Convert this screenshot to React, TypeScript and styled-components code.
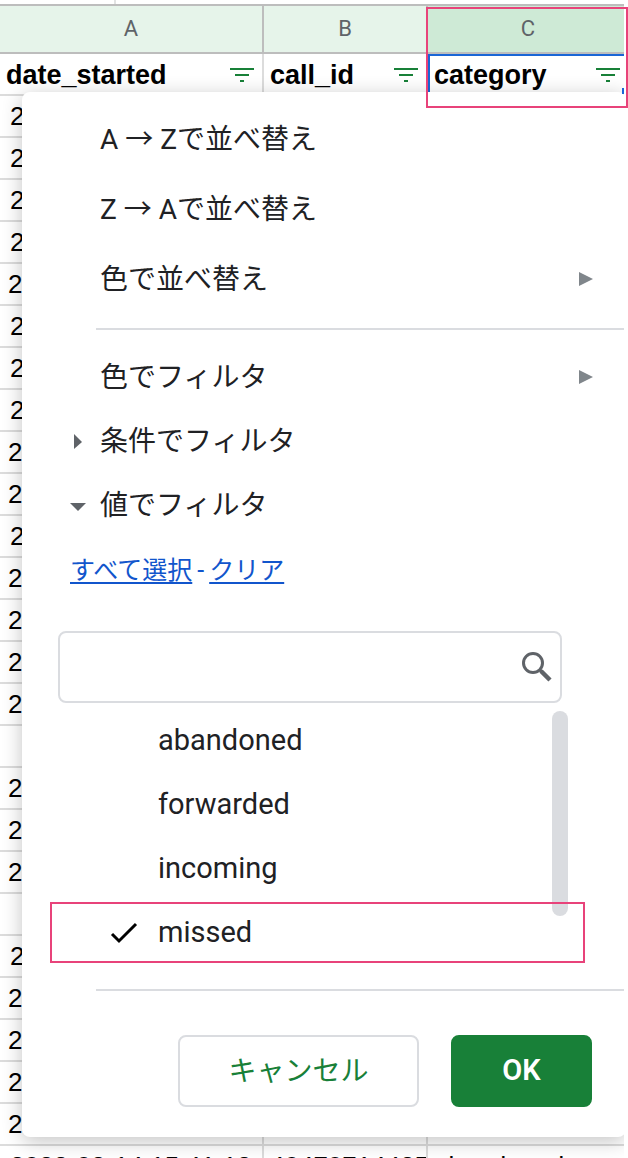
import React from "react";
import styled, { createGlobalStyle, css } from "styled-components";

const Global = createGlobalStyle`
  * { box-sizing: border-box; }
  body {
    margin: 0;
    background: #fff;
    font-family: Roboto, "Noto Sans CJK JP", sans-serif;
    color: #202124;
  }
  button, input { font: inherit; color: inherit; }
`;

const Page = styled.main`
  position: relative;
  padding-right: 4px;
`;

const Viewport = styled.div`
  position: relative;
  height: 100vh;
  overflow: hidden;
`;

const TopStrip = styled.div`
  width: 116px;
  height: 4px;
  border-right: 2px solid #e2e3e3;
`;

const Sheet = styled.table`
  width: calc(100% + 6px);
  table-layout: fixed;
  border-collapse: separate;
  border-spacing: 0;
  font-family: "Liberation Sans", Arial, sans-serif;
  font-size: 26px;
  line-height: 30px;
  color: #000;
`;

const Column = styled.col<{ $width?: number }>`
  ${(p) => p.$width && `width: ${p.$width}px;`}
`;

const ColumnLetter = styled.th<{ $active?: boolean }>`
  height: 50px;
  padding: 0;
  border: 0 solid #bdbdbd;
  border-width: 2px 2px 2px 0;
  background: ${(p) => (p.$active ? "#ceead6" : "#e6f4ea")};
  color: #5f6368;
  font-family: Roboto, sans-serif;
  font-size: 22px;
  font-weight: 400;
`;

const cell = css`
  height: 42px;
  padding: 0 6px;
  border: 0 solid #dcdcdc;
  border-width: 0 2px 2px 0;
  white-space: nowrap;
  overflow: hidden;
`;

const FieldCell = styled.th<{ $selected?: boolean }>`
  ${cell}
  padding-top: 2px;
  font-size: 27px;
  text-align: left;
  ${(p) => p.$selected && "box-shadow: inset 2px 2px #1a66d6;"}
`;

const DataCell = styled.td<{ $indent?: number }>`
  ${cell}
  ${(p) => p.$indent && `padding: 0 0 0 ${p.$indent}px;`}
`;

const Field = styled.div`
  display: flex;
  align-items: center;
  justify-content: space-between;
`;

const FilterButton = styled.button`
  display: flex;
  padding: 0 2px;
  border: 0;
  background: none;
`;

const Menu = styled.section`
  position: absolute;
  top: 92px;
  left: 22px;
  right: -2px;
  padding: 12px 0 30px;
  border-radius: 8px;
  background: #fff;
  box-shadow: 0 4px 20px rgba(0, 0, 0, 0.24);
  font-size: 28px;
`;

const SelectionHandle = styled.span`
  position: absolute;
  top: 88px;
  right: 0;
  width: 2px;
  height: 6px;
  background: #1a66d6;
`;

const MenuItem = styled.button<{ $compact?: boolean }>`
  display: flex;
  align-items: center;
  width: 100%;
  height: ${(p) => (p.$compact ? 64 : 70)}px;
  padding: 0 33px 0 48px;
  border: 0;
  background: none;
  text-align: left;
  white-space: nowrap;
`;

const Marker = styled.span`
  display: flex;
  width: 30px;
`;

const Label = styled.span`
  flex: 1;
  padding-bottom: 4px;
`;

const Divider = styled.hr`
  height: 2px;
  margin: 14px 2px 15px 74px;
  border: 0;
  background: #dadce0;
`;

const Links = styled.div`
  display: flex;
  gap: 5px;
  padding: 18px 48px 0;
  font-size: 25px;
  line-height: 32px;
  color: #1155cc;
`;

const Link = styled.a`
  color: inherit;
  text-underline-offset: 3px;
  text-decoration-thickness: 2px;
`;

const SearchBox = styled.label`
  display: flex;
  align-items: center;
  height: 72px;
  margin: 44px 64px 0 36px;
  padding: 0 7px 0 16px;
  border: 2px solid #dadce0;
  border-radius: 8px;
`;

const SearchInput = styled.input`
  flex: 1;
  min-width: 0;
  border: 0;
  outline: 0;
  background: none;
`;

const ValueList = styled.div`
  display: flex;
  margin: 5px 58px 0 28px;
  padding-bottom: 11px;
`;

const Values = styled.div`
  flex: 1;
`;

const Value = styled.label`
  display: flex;
  align-items: center;
  height: 64px;
  padding-left: 60px;
  font-size: 29px;
`;

const Check = styled.input`
  appearance: none;
  width: 28px;
  height: 28px;
  margin: 0 20px 0 0;
  &:checked {
    background: center / 28px no-repeat
      url("data:image/svg+xml,%3Csvg xmlns='http://www.w3.org/2000/svg' viewBox='0 0 28 28' fill='none' stroke='%23000' stroke-width='3'%3E%3Cpath d='M2 16l7 7L26 6'/%3E%3C/svg%3E");
  }
`;

const ScrollThumb = styled.div`
  width: 16px;
  height: 205px;
  margin-top: 3px;
  border-radius: 8px;
  background: #dadce0;
`;

const Actions = styled.div`
  display: flex;
  justify-content: flex-end;
  gap: 32px;
  margin-top: 44px;
  padding-right: 34px;
`;

const ActionButton = styled.button<{ $primary?: boolean }>`
  width: ${(p) => (p.$primary ? 141 : 241)}px;
  height: 72px;
  padding: 0 0 ${(p) => (p.$primary ? 2 : 4)}px;
  border: 2px solid ${(p) => (p.$primary ? "#188038" : "#dadce0")};
  border-radius: 8px;
  background: ${(p) => (p.$primary ? "#188038" : "#fff")};
  color: ${(p) => (p.$primary ? "#fff" : "#188038")};
  font-size: ${(p) => (p.$primary ? 29 : 28)}px;
  font-weight: ${(p) => (p.$primary ? 600 : 400)};
`;

const Highlight = styled.div<{ $area: "column" | "value" }>`
  position: absolute;
  pointer-events: none;
  border: 2px solid #e8437a;
  ${(p) =>
    p.$area === "column"
      ? "top: 7px; left: 426px; right: 0; height: 101px;"
      : "top: 902px; left: 50px; right: 43px; height: 61px;"}
`;

const FilterIcon = () => (
  <svg width="24" height="14" viewBox="0 0 24 14" fill="#188038" aria-hidden="true">
    <path d="M0 0h24v2H0zM5 6h14v2H5zM10 12h4v2h-4z" />
  </svg>
);

const SearchIcon = () => (
  <svg width="32" height="32" viewBox="0 0 32 32" fill="none" stroke="#5f6368" aria-hidden="true">
    <circle cx="12" cy="12" r="9.5" strokeWidth="3" />
    <path d="M18.5 18.5l2 2" strokeWidth="3" />
    <path d="M20 20l9 9" strokeWidth="4.5" />
  </svg>
);

type CaretProps = { d: string; size: number; fill?: string };

const Caret = ({ d, size, fill = "#5f6368" }: CaretProps) => (
  <svg width={size} height={size} viewBox={`0 0 ${size} ${size}`} fill={fill} aria-hidden="true">
    <path d={d} />
  </svg>
);

const SubmenuArrow = () => <Caret d="M0 0l14 7L0 14z" size={14} fill="#80868b" />;

const fields = [
  { letter: "A", name: "date_started" },
  { letter: "B", name: "call_id" },
  { letter: "C", name: "category" },
];

// Left indent of each date; 0 marks a row without one.
const rowIndents = [
  10, 10, 10, 10, 8, 10, 10, 10, 8, 8, 10, 8, 8, 8, 8, 0, 8, 8, 8, 0, 10, 8, 8, 8, 8,
];

const values = ["abandoned", "forwarded", "incoming", "missed"];

export default function App() {
  return (
    <Page>
      <Global />
      <Viewport>
        <TopStrip />
        <Sheet>
          <colgroup>
            <Column $width={264} />
            <Column $width={164} />
            <Column />
          </colgroup>
          <thead>
            <tr>
              {fields.map((f) => (
                <ColumnLetter key={f.letter} $active={f.letter === "C"}>
                  {f.letter}
                </ColumnLetter>
              ))}
            </tr>
            <tr>
              {fields.map((f) => (
                <FieldCell key={f.name} $selected={f.letter === "C"}>
                  <Field>
                    {f.name}
                    <FilterButton aria-label={`${f.name} filter`}>
                      <FilterIcon />
                    </FilterButton>
                  </Field>
                </FieldCell>
              ))}
            </tr>
          </thead>
          <tbody>
            {rowIndents.map((indent, i) => (
              <tr key={i}>
                <DataCell $indent={indent}>{indent ? "2" : ""}</DataCell>
                <DataCell />
                <DataCell />
              </tr>
            ))}
            <tr>
              <DataCell $indent={10}>2022-02-14 15:41:18</DataCell>
              <DataCell>404707144351</DataCell>
              <DataCell>abandoned</DataCell>
            </tr>
          </tbody>
        </Sheet>

        <Menu>
          <MenuItem><Marker /><Label>A → Zで並べ替え</Label></MenuItem>
          <MenuItem><Marker /><Label>Z → Aで並べ替え</Label></MenuItem>
          <MenuItem><Marker /><Label>色で並べ替え</Label><SubmenuArrow /></MenuItem>
          <Divider />
          <MenuItem $compact><Marker /><Label>色でフィルタ</Label><SubmenuArrow /></MenuItem>
          <MenuItem $compact aria-expanded="false">
            <Marker><Caret d="M4 1l8 8-8 7z" size={16} /></Marker>
            <Label>条件でフィルタ</Label>
          </MenuItem>
          <MenuItem $compact aria-expanded="true">
            <Marker><Caret d="M0 6h16l-8 8z" size={16} /></Marker>
            <Label>値でフィルタ</Label>
          </MenuItem>
          <Links>
            <Link href="#all">すべて選択</Link>-<Link href="#clear">クリア</Link>
          </Links>
          <SearchBox>
            <SearchInput type="text" aria-label="検索" />
            <SearchIcon />
          </SearchBox>
          <ValueList>
            <Values>
              {values.map((v) => (
                <Value key={v}>
                  <Check type="checkbox" defaultChecked={v === "missed"} />
                  {v}
                </Value>
              ))}
            </Values>
            <ScrollThumb />
          </ValueList>
          <Divider />
          <Actions>
            <ActionButton>キャンセル</ActionButton>
            <ActionButton $primary>OK</ActionButton>
          </Actions>
        </Menu>
        <SelectionHandle />
      </Viewport>

      <Highlight $area="column" />
      <Highlight $area="value" />
    </Page>
  );
}
